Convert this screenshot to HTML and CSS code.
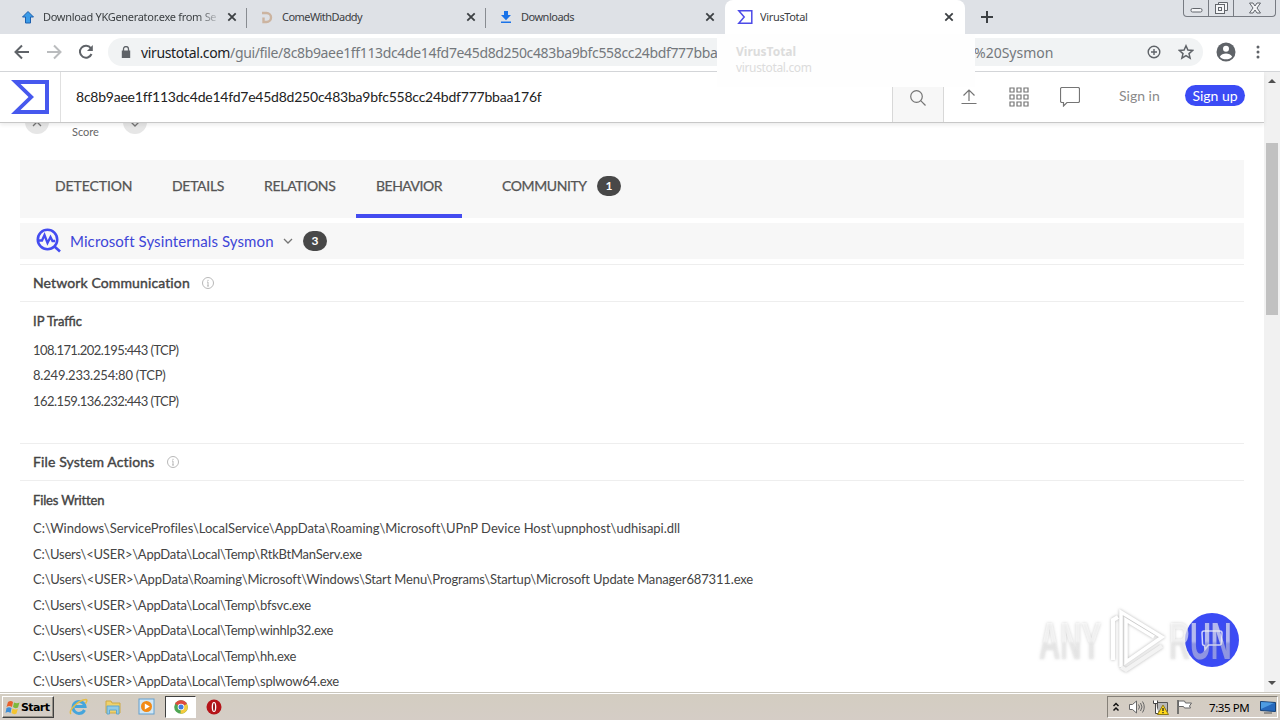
FILE: index.html
```html
<!DOCTYPE html>
<html lang="en">
<head>
    <meta charset="UTF-8">
    <meta name="viewport" content="width=device-width, initial-scale=1.0">
    <title>VirusTotal</title>
    <link rel="stylesheet" href="styles.css">
</head>
<body>
    <div class="tab-strip">
        <div class="tab">
            <svg class="favicon" viewBox="0 0 16 16"><path d="M8 2.500L13.500 8h-3v6h-5V8h-3z" fill="#3a9be8" stroke="#1c5fae" stroke-width="1"/></svg>
            <span class="tab-title fade t-download">Download YKGenerator.exe from Se</span>
            <svg class="close" viewBox="0 0 10 10"><path d="M1.3 1.3l7.4 7.4M8.7 1.3L1.3 8.7"/></svg>
        </div>
        <div class="tab">
            <svg class="favicon" viewBox="0 0 16 16"><path d="M3 4h4.500a4.500 4.500 0 0 1 0 9H4.500V8.500" fill="none" stroke="#ccb4a0" stroke-width="2.400"/></svg>
            <span class="tab-title t-daddy">ComeWithDaddy</span>
            <svg class="close" viewBox="0 0 10 10"><path d="M1.3 1.3l7.4 7.4M8.7 1.3L1.3 8.7"/></svg>
        </div>
        <div class="tab last">
            <svg class="favicon" viewBox="0 0 16 16"><path d="M6 2h4v4h3L8 11.200 3 6h3zM3 12.500h10v1.500H3z" fill="#1a73e8"/></svg>
            <span class="tab-title t-downloads">Downloads</span>
            <svg class="close" viewBox="0 0 10 10"><path d="M1.3 1.3l7.4 7.4M8.7 1.3L1.3 8.7"/></svg>
        </div>
        <div class="tab active">
            <svg class="favicon" viewBox="0 0 16 16"><path d="M1.800 1.700h13v12.600h-13L7.200 8z" fill="none" stroke="#4d4be8" stroke-width="1.500"/></svg>
            <span class="tab-title t-virus">VirusTotal</span>
            <svg class="close" viewBox="0 0 10 10"><path d="M1.3 1.3l7.4 7.4M8.7 1.3L1.3 8.7"/></svg>
        </div>
        <svg class="new-tab" viewBox="0 0 14 14"><path d="M7 1v12M1 7h12" stroke="#3c4043" stroke-width="2"/></svg>
        <div class="window-controls">
            <span class="win-btn"><svg width="24" height="16" viewBox="0 0 24 16"><rect x="7" y="8.500" width="11" height="3.500" rx="1.500"/></svg></span>
            <span class="win-btn"><svg width="24" height="16" viewBox="0 0 24 16"><path d="M9.500 4.500V2.500h9v8h-3"/><rect x="6.500" y="4.500" width="9" height="9"/><rect x="9.500" y="7.500" width="3" height="3"/></svg></span>
            <span class="win-btn wide"><svg width="41" height="16" viewBox="0 0 41 16"><path d="M15.500 3h3.500l2 3 2-3h3.500l-3.500 5 3.500 5H23l-2-3-2 3h-3.500L19 8z"/></svg></span>
        </div>
    </div>

    <div class="toolbar">
        <svg class="nav back" viewBox="0 0 16 16"><path d="M15 8H2M8 1.500L1.500 8 8 14.500"/></svg>
        <svg class="nav forward" viewBox="0 0 16 16"><path d="M1 8h13M8 1.500L14.500 8 8 14.500"/></svg>
        <svg class="nav reload" viewBox="0 0 16 16"><path d="M13.500 10A6 6 0 1 1 12.800 4.200"/><path d="M14.800 1v6H9z" fill="#5f6368" stroke="none"/></svg>
        <div class="address">
            <svg class="lock" viewBox="0 0 10 12"><path d="M.8 4.500h8.400V12H.8z" fill="#5f6368"/><path d="M2.500 5V3a2.500 2.500 0 0 1 5 0v2" fill="none" stroke="#5f6368" stroke-width="1.300"/></svg>
            <span class="url"><b>virustotal.com</b>/gui/file/8c8b9aee1ff113dc4de14fd7e45d8d250c483ba9bfc558cc24bdf777bba</span>
            <span class="url-end">%20Sysmon</span>
            <svg class="zoom" viewBox="0 0 14 14"><circle cx="7" cy="7" r="5.800"/><path d="M7 4v6M4 7h6"/></svg>
            <svg class="star" viewBox="0 0 16 16"><path d="M8 1.800l1.900 4.300 4.700.4-3.600 3.100 1.100 4.600L8 11.700l-4.100 2.500L5 9.600 1.400 6.500l4.700-.4z"/></svg>
        </div>
        <svg class="avatar" viewBox="0 0 20 20"><circle cx="10" cy="10" r="9.500" fill="#5f6368"/><circle cx="10" cy="6.800" r="3" fill="#fff"/><path d="M3.800 14.800C5 12.300 7.500 11.500 10 11.500s5 .8 6.200 3.300C14.500 16.700 12.500 17.300 10 17.300s-4.500-.6-6.200-2.500z" fill="#fff"/></svg>
        <svg class="menu" viewBox="0 0 4 16"><circle cx="2" cy="3" r="1.500"/><circle cx="2" cy="8" r="1.500"/><circle cx="2" cy="13" r="1.500"/></svg>
    </div>
    <div class="hover-card">
        <div class="card-title">VirusTotal</div>
        <div class="card-host">virustotal.com</div>
    </div>

    <div class="viewport">
        <div class="page">
            <header class="vt-header">
                <div class="logo"><svg width="38" height="34" viewBox="0 0 38 34"><path d="M0 0h38v34H0l17.500-17zM9.500 4L23 17 9.500 30H34V4z" fill="#4658ee" fill-rule="evenodd"/></svg></div>
                <div class="hash">8c8b9aee1ff113dc4de14fd7e45d8d250c483ba9bfc558cc24bdf777bbaa176f</div>
                <div class="search"><svg width="16" height="16" viewBox="0 0 16 16"><circle cx="6.500" cy="6.500" r="5.800"/><path d="M10.700 10.700L15.500 15.500"/></svg></div>
                <div class="icons">
                    <svg width="18" height="20" viewBox="0 0 18 20"><path d="M9 14V3M3.500 8.500L9 3l5.500 5.500M1.500 16.500h15"/></svg>
                    <svg width="20" height="20" viewBox="0 0 20 20"><path d="M1 1h4v4H1zM8 1h4v4H8zM15 1h4v4h-4zM1 8h4v4H1zM8 8h4v4H8zM15 8h4v4h-4zM1 15h4v4H1zM8 15h4v4H8zM15 15h4v4h-4z"/></svg>
                    <svg width="20" height="20" viewBox="0 0 20 20"><path d="M2 .5h16a1.500 1.500 0 0 1 1.500 1.500v12a1.500 1.500 0 0 1-1.500 1.500H7L3.500 19v-3.500H2A1.500 1.500 0 0 1 .5 14V2A1.500 1.500 0 0 1 2 .5z"/></svg>
                </div>
                <div class="account">
                    <span class="sign-in">Sign in</span>
                    <span class="sign-up">Sign up</span>
                </div>
            </header>

            <div class="score-row">
                <span class="vote"><svg width="10" height="6" viewBox="0 0 10 6"><path d="M1 5l4-4 4 4"/></svg></span>
                <span class="score">Score</span>
                <span class="vote"><svg width="10" height="6" viewBox="0 0 10 6"><path d="M1 1l4 4 4-4"/></svg></span>
            </div>

            <main class="report">
                <nav class="report-tabs">
                    <span class="item detection">DETECTION</span>
                    <span class="item details">DETAILS</span>
                    <span class="item relations">RELATIONS</span>
                    <span class="item behavior">BEHAVIOR</span>
                    <span class="item community">COMMUNITY</span>
                    <span class="badge">1</span>
                </nav>
                <div class="sandbox">
                    <svg width="26" height="26" viewBox="0 0 26 26"><circle cx="11.500" cy="11.500" r="9.700"/><path d="M18.500 18.500l5.500 5"/><path d="M3 12.500h3l2.500-5.500 3 8 3-6 2 4h2.500" stroke-width="2.300"/></svg>
                    <span class="sandbox-name">Microsoft Sysinternals Sysmon</span>
                    <svg class="chevron" width="10" height="6" viewBox="0 0 10 6"><path d="M1 1l4 4 4-4"/></svg>
                    <span class="badge">3</span>
                </div>

                <section>
                    <h2><span class="h-network">Network Communication</span><svg class="info" viewBox="0 0 12 12"><circle cx="6" cy="6" r="5.500"/><path d="M6 5v4M6 2.800v1.200M5 5h1M5 9h2"/></svg></h2>
                    <h3 class="h-ip">IP Traffic</h3>
                    <ul class="ips">
                        <li>108.171.202.195:443 (TCP)</li>
                        <li class="short">8.249.233.254:80 (TCP)</li>
                        <li>162.159.136.232:443 (TCP)</li>
                    </ul>
                </section>
                <section>
                    <h2><span class="h-files">File System Actions</span><svg class="info" viewBox="0 0 12 12"><circle cx="6" cy="6" r="5.500"/><path d="M6 5v4M6 2.800v1.200M5 5h1M5 9h2"/></svg></h2>
                    <h3 class="h-written">Files Written</h3>
                    <ul class="paths">
                        <li class="system">C:\Windows\ServiceProfiles\LocalService\AppData\Roaming\Microsoft\UPnP Device Host\upnphost\udhisapi.dll</li>
                        <li>C:\Users\&lt;USER&gt;\AppData\Local\Temp\RtkBtManServ.exe</li>
                        <li class="long">C:\Users\&lt;USER&gt;\AppData\Roaming\Microsoft\Windows\Start Menu\Programs\Startup\Microsoft Update Manager687311.exe</li>
                        <li>C:\Users\&lt;USER&gt;\AppData\Local\Temp\bfsvc.exe</li>
                        <li>C:\Users\&lt;USER&gt;\AppData\Local\Temp\winhlp32.exe</li>
                        <li>C:\Users\&lt;USER&gt;\AppData\Local\Temp\hh.exe</li>
                        <li>C:\Users\&lt;USER&gt;\AppData\Local\Temp\splwow64.exe</li>
                    </ul>
                </section>
            </main>
        </div>
        <div class="scrollbar">
            <svg width="16" height="16" viewBox="0 0 16 16"><path d="M4 11l4-4 4 4z"/></svg>
            <div class="thumb"></div>
            <svg width="16" height="16" viewBox="0 0 16 16"><path d="M4 5l4 4 4-4z"/></svg>
        </div>
    </div>

    <div class="chat"><svg width="24" height="22" viewBox="0 0 24 22"><path d="M4 2h16a2 2 0 0 1 2 2l-.5 10a2 2 0 0 1-2 2H8.500L5 20.500l-.5-4a2 2 0 0 1-2-2L2 4a2 2 0 0 1 2-2z"/></svg></div>
    <svg class="watermark" viewBox="0 0 200 70">
        <defs>
            <linearGradient id="shade" x1="0" y1="0" x2="0" y2="1">
                <stop offset="0.5" stop-color="#fff" stop-opacity="0.6"/>
                <stop offset="0.55" stop-color="#eaeaea" stop-opacity="0.45"/>
            </linearGradient>
        </defs>
        <g fill="url(#shade)">
            <text transform="translate(5 54) scale(.56 1)" textLength="111" lengthAdjust="spacingAndGlyphs">ANY</text>
            <text transform="translate(135 54) scale(.56 1)" textLength="112" lengthAdjust="spacingAndGlyphs">RUN</text>
        </g>
        <g fill="none" stroke="#fff" stroke-width="4">
            <path d="M79 55V15l5-3"/>
            <path d="M87 62V7l41 25-36 25V15l28 17" stroke-width="3.500"/>
            <path d="M87 62l5 3 36-24" stroke="#f3f3f3"/>
        </g>
    </svg>

    <div class="taskbar">
        <div class="start">
            <svg width="16" height="16" viewBox="0 0 16 16"><path d="M3 3q3-2 5 0L7 8Q4 6 1.500 8z" fill="#e8602c"/><path d="M9 3.500q3 1.500 5.500 0L13 8.500Q10 10 8 8z" fill="#7cb83c"/><path d="M1.500 9Q4 7.500 6.500 9L5.500 14Q3 12 .5 14z" fill="#3f8fd8"/><path d="M7.500 9.500Q10 11 12.800 10l-1.300 4.500Q9 16 6.500 14z" fill="#f4c430"/></svg>
            <b>Start</b>
        </div>
        <div class="task"><svg width="20" height="18" viewBox="0 0 20 18"><path d="M15.500 12A6 6 0 1 1 16 8.500H6" fill="none" stroke="#45a5dc" stroke-width="3"/><path d="M2 16C-1 13 9 2 17 1.500q2 .5-.5 4" fill="none" stroke="#e5bd45" stroke-width="1.500"/></svg></div>
        <div class="task"><svg width="18" height="18" viewBox="0 0 18 18"><path d="M2 3h5l1 2h8v10H2z" fill="#efd16b" stroke="#cda944"/><path d="M3 8h12v8h-2.500v-4h-7v4H3z" fill="#8fcbe8" stroke="#61a7cd"/></svg></div>
        <div class="task"><svg width="18" height="18" viewBox="0 0 18 18"><rect x="1" y="1" width="15" height="15" fill="#d1e7f6" stroke="#62a0cf"/><circle cx="8.500" cy="8.500" r="5.500" fill="#f28a16"/><path d="M6.800 5.500v6l5-3z" fill="#fff"/></svg></div>
        <div class="task current"><svg width="14" height="14" viewBox="0 0 14 14"><circle cx="7" cy="7" r="6.800" fill="#4fa653"/><path d="M7 7L1 3.800A6.800 6.800 0 0 1 13 4z" fill="#de4b3e"/><path d="M7 7l6-3A6.800 6.800 0 0 1 6.500 13.800z" fill="#f5cb3c"/><circle cx="7" cy="7" r="3.300" fill="#fff"/><circle cx="7" cy="7" r="2.500" fill="#3f7de0"/></svg></div>
        <div class="task"><svg width="16" height="16" viewBox="0 0 16 16"><circle cx="8" cy="8" r="7.500" fill="#b51419"/><ellipse cx="8" cy="8" rx="2.300" ry="5" fill="#fff"/><ellipse cx="8" cy="8" rx="1" ry="4" fill="#93151a"/></svg></div>
        <div class="tray">
            <svg class="tray-chevrons" width="8" height="10" viewBox="0 0 8 10"><path d="M1.500 4L4 1.500 6.500 4M1.500 8.500L4 6l2.500 2.500" fill="none" stroke="#111" stroke-width="1.500"/></svg>
            <svg class="tray-sound" width="17" height="16" viewBox="0 0 17 16"><path d="M1.500 5.500h3L8.500 2v12l-4-3.500h-3z" fill="#fff" stroke="#666"/><path d="M10.500 5.500q2 2.500 0 5M12.500 4q3 4 0 8M14.500 2.500q3.500 5.500 0 11" fill="none" stroke="#666"/></svg>
            <svg class="tray-net" width="17" height="17" viewBox="0 0 17 17"><path d="M5.500 3.500h10v9h-10z" fill="#b8b8b8" stroke="#555"/><path d="M1.500 1.500v3h4v-3M3.500 4.500v10H7" fill="#fff" stroke="#444"/><path d="M11 6l5.500 9.500h-11z" fill="#ffd91a" stroke="#8f7a16"/><path d="M11 9v3M11 13v1.300" stroke="#222" stroke-width="1.300"/></svg>
            <svg class="tray-flag" width="17" height="16" viewBox="0 0 17 16"><path d="M2 1v14" stroke="#555" stroke-width="1.500"/><path d="M2.500 2h6l1 2h6l-2 3 1 2h-6l-1-1.500h-5z" fill="#fff" stroke="#666"/></svg>
            <span class="clock">7:35 PM</span>
            <svg class="tray-desktop" width="16" height="14" viewBox="0 0 16 14"><path d="M.5 1.500l15 1v9l-15-1z" fill="#2769bd" stroke="#174174"/><path d="M1 2l13 1-13 6z" fill="#4e9ce2"/><path d="M4 13h8" stroke="#555"/></svg>
        </div>
    </div>
</body>
</html>
```
FILE: styles.css
```css
* {
    box-sizing: border-box;
    margin: 0;
    padding: 0;
}

body {
    width: 1280px;
    height: 720px;
    overflow: hidden;
    display: flex;
    flex-direction: column;
    background-color: #fff;
    font-family: Lato, "Liberation Sans", sans-serif;
    color: #3c4043;
}

svg {
    display: block;
    flex: none;
}

span {
    white-space: nowrap;
}

/* browser tabs */
.tab-strip {
    display: flex;
    flex: none;
    height: 34px;
    padding-left: 8px;
    background-color: #dee1e6;
    font-family: "Noto Sans", sans-serif;
}

.tab {
    display: flex;
    align-items: center;
    width: 239px;
    padding: 0 10px 0 12px;
    background: linear-gradient(#888c91, #888c91) right 8px / 1px 20px no-repeat;
}

.tab.last {
    background: none;
}

.tab.active {
    width: 240px;
    padding-right: 11px;
    background: #fff;
    border-radius: 8px 8px 0 0;
}

.favicon {
    width: 16px;
    height: 16px;
}

.tab-title {
    flex: 1;
    margin-left: 7px;
    overflow: hidden;
    font-size: 11px;
    line-height: 18px;
}

.fade {
    -webkit-mask-image: linear-gradient(to right, #000 155px, transparent 178px);
    mask-image: linear-gradient(to right, #000 155px, transparent 178px);
}

.t-download {
    letter-spacing: -0.3px;
}

.t-daddy {
    letter-spacing: -0.55px;
}

.t-downloads {
    letter-spacing: -0.5px;
}

.t-virus {
    letter-spacing: -0.35px;
}

.close {
    width: 10px;
    height: 10px;
    stroke: #3c4043;
    stroke-width: 1.8;
}

.new-tab {
    width: 14px;
    height: 14px;
    margin: 10px 0 0 15px;
}

.window-controls {
    display: flex;
    width: 93px;
    height: 17px;
    margin-left: 189px;
    border: 1px solid #777b82;
    border-top: none;
    border-radius: 0 0 4px 4px;
}

.win-btn {
    width: 25px;
    border-right: 1px solid #777b82;
}

.win-btn.wide {
    flex: 1;
    border: none;
}

.win-btn svg {
    fill: #f4f5f7;
    stroke: #62666c;
}

/* browser toolbar */
.toolbar {
    display: flex;
    flex: none;
    align-items: center;
    height: 38px;
    padding: 0 0 1px 14px;
    border-bottom: 1px solid #d3d5d8;
}

.nav {
    width: 16px;
    height: 16px;
    margin-right: 16px;
    fill: none;
    stroke: #5f6368;
    stroke-width: 2;
}

.nav.forward {
    stroke: #babcbe;
}

.nav.reload {
    margin-right: 14px;
}

.address {
    display: flex;
    align-items: center;
    width: 1095px;
    height: 28px;
    padding-left: 13px;
    border-radius: 14px;
    background-color: #f1f3f4;
    font-family: "Noto Sans", sans-serif;
    font-size: 14px;
    color: #74787c;
}

.lock {
    width: 10px;
    height: 12px;
}

.url {
    width: 577px;
    margin-left: 10px;
    letter-spacing: -0.35px;
}

.url b {
    font-weight: normal;
    color: #202124;
}

.url-end {
    width: 78px;
    margin-left: 256px;
    letter-spacing: 0;
}

.zoom {
    width: 14px;
    height: 14px;
    margin-left: 95px;
    fill: none;
    stroke: #5f6368;
    stroke-width: 1.4;
}

.star {
    width: 16px;
    height: 16px;
    margin-left: 17px;
    fill: none;
    stroke: #5f6368;
    stroke-width: 1.5;
}

.avatar {
    width: 20px;
    height: 20px;
    margin-left: 13px;
}

.menu {
    width: 4px;
    height: 16px;
    margin-left: 20px;
    fill: #5f6368;
}

/* tooltip fading out under the active tab */
.hover-card {
    position: absolute;
    left: 717px;
    top: 34px;
    z-index: 3;
    width: 258px;
    height: 53px;
    padding: 10px 19px;
    background-color: #fefefe;
    font-family: "Noto Sans", sans-serif;
    font-size: 12px;
    line-height: 16px;
    color: #dcdcdc;
}

.card-title {
    font-weight: bold;
}

.card-host {
    letter-spacing: -0.35px;
}

/* page */
.viewport {
    display: flex;
    flex: 1;
    min-height: 0;
    overflow: hidden;
}

.page {
    width: 1264px;
}

.vt-header {
    display: flex;
    position: relative;
    z-index: 1;
    height: 51px;
    background-color: #fff;
    border-bottom: 1px solid #c8c8c8;
    box-shadow: 0 2px 4px rgba(0, 0, 0, 0.08);
}

.logo {
    width: 61px;
    padding: 8px 0 0 11px;
    border-right: 1px solid #e0e0e0;
}

.hash {
    width: 831px;
    padding-left: 15px;
    font-size: 14px;
    line-height: 50px;
    letter-spacing: -0.23px;
    color: #222;
}

.search {
    width: 52px;
    padding: 18px 0 0 17px;
    background-color: #f7f7f7;
    border: solid #d8d8d8;
    border-width: 0 1px;
}

.search svg,
.icons svg {
    fill: none;
    stroke: #757575;
    stroke-width: 1.2;
}

.icons {
    display: flex;
    align-items: center;
    gap: 31px;
    margin-left: 16px;
}

.account {
    display: flex;
    align-items: center;
    gap: 24px;
    height: 47px;
    margin-left: 39px;
    font-size: 14px;
}

.sign-in {
    width: 42px;
    color: #8a8a8a;
}

.sign-up {
    width: 60px;
    border-radius: 11px;
    background-color: #3b4bf5;
    color: #fff;
    line-height: 21px;
    text-align: center;
}

.score-row {
    display: flex;
    height: 37px;
    padding-left: 25px;
}

.vote {
    width: 24px;
    height: 24px;
    margin-top: -13px;
    padding: 11px 7px;
    border-radius: 12px;
    background-color: #e6e6e6;
}

.vote path,
.chevron path {
    fill: none;
    stroke: #757575;
    stroke-width: 1.3;
}

.score {
    width: 74px;
    padding-left: 23px;
    font-size: 11px;
    line-height: 18px;
    color: #666;
}

.report {
    padding: 0 20px;
    color: #444;
}

.report-tabs {
    display: flex;
    height: 58px;
    padding-left: 15px;
    background-color: #f7f7f7;
    font-size: 14px;
    line-height: 52px;
}

.item {
    padding-left: 20px;
    letter-spacing: -0.3px;
    color: #555;
    -webkit-text-stroke: 0.25px #555;
}

.detection {
    width: 117px;
    letter-spacing: -0.1px;
}

.details {
    width: 92px;
}

.relations {
    width: 112px;
}

.behavior {
    width: 106px;
    border-bottom: 4px solid #444cf0;
    letter-spacing: -0.5px;
}

.community {
    width: 115px;
    margin-left: 20px;
    letter-spacing: -0.4px;
}

.badge {
    width: 24px;
    height: 20px;
    border-radius: 10px;
    background-color: #484848;
    color: #fff;
    font-size: 12px;
    font-weight: bold;
    line-height: 20px;
    text-align: center;
}

.report-tabs .badge {
    margin-top: 16px;
}

.sandbox {
    display: flex;
    align-items: center;
    height: 36px;
    margin: 5px 0;
    padding: 0 0 1px 16px;
    background-color: #f7f7f7;
}

.sandbox > svg:first-child {
    fill: none;
    stroke: #444cf0;
    stroke-width: 2.6;
}

.sandbox-name {
    width: 204px;
    margin-left: 8px;
    font-size: 15px;
    letter-spacing: 0.1px;
    color: #3e46d8;
}

.chevron {
    margin-left: 9px;
}

.sandbox .badge {
    margin-left: 10px;
}

section {
    height: 179px;
}

h2 {
    display: flex;
    align-items: center;
    height: 38px;
    padding: 0 0 1px 13px;
    border-top: 1px solid #eee;
    border-bottom: 1px solid #eee;
    font-size: 14px;
    font-weight: normal;
    letter-spacing: 0.12px;
    -webkit-text-stroke: 0.4px #444;
}

.info {
    width: 12px;
    height: 12px;
    margin-left: 12px;
    fill: none;
    stroke: #b8b8b8;
    stroke-width: 1;
}

.h-network {
    width: 157px;
}

.h-files {
    width: 122px;
}

h3 {
    height: 35px;
    padding-left: 13px;
    font-size: 13px;
    font-weight: normal;
    line-height: 38px;
    -webkit-text-stroke: 0.4px #444;
}

.h-written {
    letter-spacing: -0.15px;
}

ul {
    padding-left: 13px;
    list-style: none;
    font-size: 13px;
}

li {
    height: 25.5px;
    line-height: 25px;
    white-space: nowrap;
}

.ips li {
    line-height: 26px;
    letter-spacing: -0.57px;
}

.ips .short {
    line-height: 25px;
    letter-spacing: -0.2px;
}

.paths li {
    line-height: 24px;
    letter-spacing: -0.22px;
}

.paths .system {
    letter-spacing: -0.01px;
}

.paths .long {
    letter-spacing: -0.15px;
}

.scrollbar {
    display: flex;
    flex-direction: column;
    width: 16px;
    background-color: #f1f1f1;
    fill: #505050;
}

.thumb {
    width: 12px;
    height: 172px;
    margin: 55px 2px auto;
    background-color: #c1c1c1;
}

.chat {
    position: absolute;
    left: 1185px;
    top: 613px;
    width: 54px;
    height: 54px;
    padding: 16px 15px;
    border-radius: 50%;
    background-color: #3b4bf5;
}

.chat path {
    fill: none;
    stroke: #d4d8ff;
    stroke-width: 1.5;
}

.watermark {
    position: absolute;
    left: 1034px;
    top: 605px;
    width: 200px;
    height: 70px;
    filter: drop-shadow(0 0 1.5px rgba(110, 110, 110, 0.5));
    font-family: "Liberation Sans", sans-serif;
    font-size: 52px;
    font-weight: bold;
}

/* taskbar */
.taskbar {
    display: flex;
    flex: none;
    align-items: center;
    height: 28px;
    padding: 1px 2px 0;
    border-top: 1px solid #c9c6bd;
    background: linear-gradient(#fff 1px, #d3cdc1 1px, #d5cdc6 100%);
    font-family: "DejaVu Sans", sans-serif;
}

.start {
    display: flex;
    align-items: center;
    width: 52px;
    height: 22px;
    margin-right: 8px;
    padding-left: 2px;
    border: 1px solid;
    border-color: #fff #404040 #404040 #fff;
    box-shadow: inset -1px -1px #969188;
    font-size: 11px;
    letter-spacing: -0.6px;
    color: #000;
}

.task {
    display: flex;
    align-items: center;
    justify-content: center;
    width: 34px;
    height: 22px;
}

.task.current {
    width: 31px;
    margin: 0 1px;
    border: 1px solid;
    border-color: #404040 #fff #fff #404040;
    background-color: #fff;
}

.tray {
    display: flex;
    align-items: center;
    width: 171px;
    height: 22px;
    margin-left: auto;
    padding-left: 4px;
    border: 1px solid;
    border-color: #858078 #fff #fff #858078;
}

.tray-sound {
    margin-left: 8px;
}

.tray-net,
.tray-flag {
    margin-left: 7px;
}

.clock {
    width: 40px;
    margin-left: 16px;
    font-family: "Noto Sans", sans-serif;
    font-size: 11.5px;
    letter-spacing: -0.4px;
    color: #000;
}

.tray-desktop {
    margin-left: 11px;
}
```
